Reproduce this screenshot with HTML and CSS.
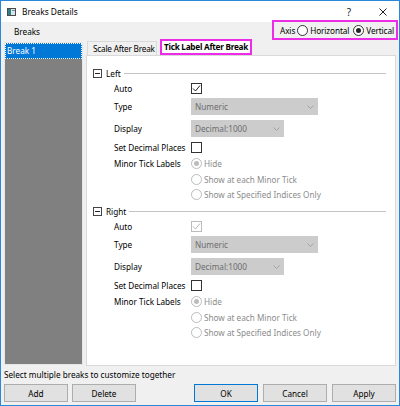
FILE: index.html
```html
<!DOCTYPE html>
<html lang="en">
<head>
<meta charset="utf-8">
<title>Breaks Details</title>
<link rel="stylesheet" href="styles.css">
</head>
<body>
<div class="window">
  <div class="titlebar">
    <svg class="app-icon" width="9" height="8" viewBox="0 0 9 8">
      <rect x="0.5" y="0.5" width="8" height="7" fill="#d9e4ea" stroke="#4a4a4a"/>
      <rect x="1" y="1" width="3" height="6" fill="#2f7f86"/>
      <rect x="5" y="2" width="3" height="1" fill="#7a8a92"/>
    </svg>
    <span class="title">Breaks Details</span>
    <div class="caption-btns">
      <span class="cap-btn help">?</span>
      <span class="cap-btn close">
        <svg width="8" height="8" viewBox="0 0 8 8"><path d="M0.5 0.5L7.5 7.5M7.5 0.5L0.5 7.5" stroke="#222" stroke-width="1"/></svg>
      </span>
    </div>
  </div>

  <div class="content">
    <div class="toprow">
      <span class="heading">Breaks</span>
      <div class="axis-box">
        <span>Axis</span>
        <span class="radio on"></span><span class="opt">Horizontal</span>
        <span class="radio on checked"></span><span class="opt">Vertical</span>
      </div>
    </div>

    <div class="main">
      <div class="list">
        <div class="list-item selected">Break 1</div>
      </div>
      <div class="right">
        <div class="tabs">
          <div class="tab">Scale After Break</div>
          <div class="tab active">Tick Label After Break</div>
        </div>
        <div class="panel">
          <div class="group">
            <div class="group-head">
              <span class="collapse"></span>
              <span class="group-title">Left</span>
              <span class="rule"></span>
            </div>
            <div class="form">
              <span class="lbl">Auto</span>
              <span class="cell"><span class="check on">
                <svg width="9" height="9" viewBox="0 0 9 9"><path d="M1 4.5L3.5 7L8 1.5" fill="none" stroke="#222" stroke-width="1"/></svg>
              </span></span>
              <span class="lbl">Type</span>
              <span class="cell"><span class="combo wide">Numeric<svg class="chev" width="7" height="4" viewBox="0 0 7 4"><path d="M0.5 0.5L3.5 3.5L6.5 0.5" fill="none" stroke="#a2a2a2"/></svg></span></span>
              <span class="lbl">Display</span>
              <span class="cell"><span class="combo narrow">Decimal:1000<svg class="chev" width="7" height="4" viewBox="0 0 7 4"><path d="M0.5 0.5L3.5 3.5L6.5 0.5" fill="none" stroke="#a2a2a2"/></svg></span></span>
              <span class="lbl">Set Decimal Places</span>
              <span class="cell"><span class="check on"></span></span>
              <span class="lbl">Minor Tick Labels</span>
              <span class="cell"><span class="radio checked"></span><span class="opt dim">Hide</span></span>
              <span class="lbl"></span>
              <span class="cell"><span class="radio"></span><span class="opt dim">Show at each Minor Tick</span></span>
              <span class="lbl"></span>
              <span class="cell"><span class="radio"></span><span class="opt dim">Show at Specified Indices Only</span></span>
            </div>
          </div>

          <div class="group second">
            <div class="group-head">
              <span class="collapse"></span>
              <span class="group-title">Right</span>
              <span class="rule"></span>
            </div>
            <div class="form">
              <span class="lbl">Auto</span>
              <span class="cell"><span class="check">
                <svg width="9" height="9" viewBox="0 0 9 9"><path d="M1 4.5L3.5 7L8 1.5" fill="none" stroke="#b8b8b8" stroke-width="1"/></svg>
              </span></span>
              <span class="lbl">Type</span>
              <span class="cell"><span class="combo wide">Numeric<svg class="chev" width="7" height="4" viewBox="0 0 7 4"><path d="M0.5 0.5L3.5 3.5L6.5 0.5" fill="none" stroke="#a2a2a2"/></svg></span></span>
              <span class="lbl">Display</span>
              <span class="cell"><span class="combo narrow">Decimal:1000<svg class="chev" width="7" height="4" viewBox="0 0 7 4"><path d="M0.5 0.5L3.5 3.5L6.5 0.5" fill="none" stroke="#a2a2a2"/></svg></span></span>
              <span class="lbl">Set Decimal Places</span>
              <span class="cell"><span class="check on"></span></span>
              <span class="lbl">Minor Tick Labels</span>
              <span class="cell"><span class="radio checked"></span><span class="opt dim">Hide</span></span>
              <span class="lbl"></span>
              <span class="cell"><span class="radio"></span><span class="opt dim">Show at each Minor Tick</span></span>
              <span class="lbl"></span>
              <span class="cell"><span class="radio"></span><span class="opt dim">Show at Specified Indices Only</span></span>
            </div>
          </div>
        </div>
      </div>
    </div>

    <div class="hint">Select multiple breaks to customize together</div>

    <div class="buttons">
      <div class="btn-group">
        <button class="btn">Add</button>
        <button class="btn">Delete</button>
      </div>
      <div class="btn-group wide-gap">
        <button class="btn default">OK</button>
        <button class="btn">Cancel</button>
        <button class="btn">Apply</button>
      </div>
    </div>
  </div>
</div>
</body>
</html>
```

FILE: styles.css
```css
* { box-sizing: border-box; }

html, body {
  margin: 0;
  padding: 0;
  background: #ffffff;
}

body {
  font-family: "Noto Sans", "Open Sans", sans-serif;
  font-size: 8.2px;
  color: #000;
}

.window {
  width: 400px;
  height: 406px;
  border: 1px solid #2b88d8;
  background: #f0f0f0;
  display: flex;
  flex-direction: column;
}

/* title bar */
.titlebar {
  flex: none;
  height: 21px;
  background: #ffffff;
  display: flex;
  align-items: center;
  padding-left: 6px;
}

.app-icon { flex: none; margin-top: 1px; }

.title {
  margin-left: 6px;
  font-size: 8.4px;
}

.caption-btns {
  margin-left: auto;
  display: flex;
  height: 100%;
}

.cap-btn {
  width: 34px;
  display: flex;
  align-items: center;
  justify-content: center;
}

.cap-btn.help { font-size: 10px; color: #222; }
.cap-btn.close { width: 33px; }

/* dialog body */
.content {
  flex: 1;
  display: flex;
  flex-direction: column;
  padding: 0 3px 3px 3px;
}

.toprow {
  flex: none;
  height: 16px;
  display: flex;
  justify-content: space-between;
  align-items: flex-start;
}

.heading {
  padding: 2px 0 0 10px;
  line-height: 16px;
}

.axis-box {
  margin-top: -2px;
  margin-right: -2px;
  width: 126px;
  height: 20px;
  border: 2px solid #ec2ce6;
  display: flex;
  align-items: center;
  padding-left: 6px;
  letter-spacing: -0.1px;
  position: relative;
  z-index: 1;
}

.axis-box .radio { margin-left: 2px; }
.axis-box .opt { margin-left: 2px; }
.axis-box .opt + .radio { margin-left: 4px; }

.main {
  flex: none;
  height: 328px;
  display: flex;
  gap: 3px;
}

/* break list */
.list {
  flex: none;
  width: 79px;
  height: 323px;
  margin-top: 4px;
  background: #808080;
  border: 1px solid #e6e6e6;
}

.list-item {
  height: 16px;
  line-height: 14px;
  padding-left: 1px;
  color: #fff;
}

.list-item.selected {
  background: #0078d7;
  border: 1px dotted #ffffff;
}

/* tabs */
.right {
  flex: none;
  width: 310px;
  display: flex;
  flex-direction: column;
}

.tabs {
  flex: none;
  height: 17px;
  display: flex;
  align-items: flex-end;
}

.tab {
  height: 14px;
  width: 70px;
  margin-left: 1px;
  padding-left: 5px;
  border: 1px solid #d9d9d9;
  border-bottom: none;
  background: #f0f0f0;
  line-height: 13px;
  letter-spacing: -0.2px;
  white-space: nowrap;
  overflow: hidden;
}

.tab.active {
  height: 16px;
  width: 92px;
  margin-left: 3px;
  padding-left: 2px;
  border: 2px solid #ec2ce6;
  background: #ffffff;
  font-weight: bold;
  letter-spacing: -0.25px;
  line-height: 12px;
}

.panel {
  flex: 1;
  border: 1px solid #d9d9d9;
  background: #ffffff;
  padding: 9px 9px 0 6px;
}

/* collapsible groups */
.group.second { margin-top: 2px; }

.group-head {
  height: 16px;
  display: flex;
  align-items: center;
}

.collapse {
  flex: none;
  width: 9px;
  height: 9px;
  border: 1px solid #444;
  position: relative;
}

.collapse::after {
  content: "";
  position: absolute;
  left: 1px;
  right: 1px;
  top: 3px;
  height: 1px;
  background: #222;
}

.group-title { margin-left: 4px; }

.rule {
  flex: 1;
  height: 1px;
  margin-left: 3px;
  background: #c4c4c4;
}

.form {
  display: grid;
  grid-template-columns: 77px auto;
  grid-template-rows: 15px 21px 22px 16px 17px 15px 14px;
  margin-left: 21px;
}

.lbl {
  display: flex;
  align-items: center;
  white-space: nowrap;
}

.cell {
  display: flex;
  align-items: center;
}

.check {
  width: 11px;
  height: 11px;
  border: 1px solid #bcbcbc;
  background: #fff;
  display: flex;
  align-items: center;
  justify-content: center;
}

.check.on { border-color: #333; }

.combo {
  height: 17px;
  background: #cccccc;
  border: 1px solid #cccccc;
  color: #6d6d6d;
  padding-left: 3px;
  display: flex;
  align-items: center;
  position: relative;
}

.combo.wide { width: 127px; }
.combo.narrow { width: 93px; }

.chev {
  position: absolute;
  right: 3px;
  top: 6px;
}

.radio {
  flex: none;
  width: 11px;
  height: 11px;
  border: 1px solid #bcbcbc;
  border-radius: 50%;
  background: #fff;
  display: flex;
  align-items: center;
  justify-content: center;
}

.radio.checked::after {
  content: "";
  width: 5px;
  height: 5px;
  border-radius: 50%;
  background: #bcbcbc;
}

.radio.on { border-color: #333; }
.radio.on.checked::after { background: #222; }

.opt {
  margin-left: 2px;
  white-space: nowrap;
}

.opt.dim { color: #8c8c8c; }

/* footer */
.hint {
  flex: none;
  margin-top: 2px;
  height: 14px;
  line-height: 14px;
}

.buttons {
  flex: none;
  margin-top: 2px;
  display: flex;
  justify-content: space-between;
}

.btn-group {
  display: flex;
  gap: 4px;
}

.btn-group.wide-gap { gap: 5px; }

.btn {
  width: 64px;
  height: 18px;
  padding: 0;
  margin: 0;
  font: inherit;
  color: #000;
  background: #e1e1e1;
  border: 1px solid #adadad;
}

.btn.default { border-color: #0078d7; }
```
